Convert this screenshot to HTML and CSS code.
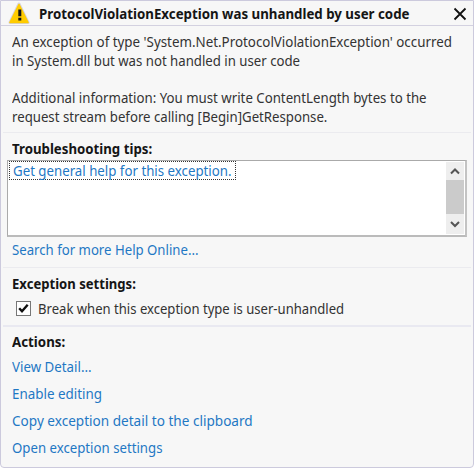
FILE: index.html
```html
<!DOCTYPE html>
<html lang="en">
<head>
<meta charset="utf-8">
<title>Exception Assistant</title>
<link rel="stylesheet" href="styles.css">
</head>
<body>
<main class="dialog">
  <header class="titlebar">
    <svg class="warning" width="22" height="22" viewBox="0 0 22 22">
      <path d="M11 2 20 20.5H2Z" fill="#ffcc00" stroke="#d5d3df" stroke-width="3" stroke-linejoin="round"/>
      <path d="M11 2.5 20 20.5H2Z" fill="#ffcc00" stroke="#ffcc00" stroke-width="1.6" stroke-linejoin="round"/>
      <path d="M10.3 7.5h3v6.8h-3zM10.3 15.7h3v2.7h-3z" fill="#151515"/>
    </svg>
    <h1><span class="t-title">ProtocolViolationException was unhandled by user code</span></h1>
    <svg class="close" width="14" height="14" viewBox="0 0 14 14"><path d="M1.5 1.5 12.5 12.5M12.5 1.5 1.5 12.5" stroke="#111" stroke-width="1.8" fill="none"/></svg>
  </header>
  <section class="message">
    <p><span class="t-m1">An exception of type 'System.Net.ProtocolViolationException' occurred</span><br><span class="t-m2">in System.dll but was not handled in user code</span></p>
    <p><span class="t-m3">Additional information: You must write ContentLength bytes to the</span><br><span class="t-m4">request stream before calling [Begin]GetResponse.</span></p>
  </section>
  <section class="tips">
    <h2><span class="t-tips">Troubleshooting tips:</span></h2>
    <div class="listbox">
      <a class="focused"><span class="t-get">Get general help for this exception.</span></a>
      <div class="scrollbar">
        <svg width="18" height="18" viewBox="0 0 18 18"><path d="M5 11.5 9 7.5 13 11.5" fill="none" stroke="#555" stroke-width="2"/></svg>
        <div class="thumb"></div>
        <svg width="18" height="20" viewBox="0 0 18 20"><path d="M5 8 9 12 13 8" fill="none" stroke="#555" stroke-width="2"/></svg>
      </div>
    </div>
    <a class="search"><span class="t-search">Search for more Help Online...</span></a>
  </section>
  <section class="settings">
    <h2><span class="t-set">Exception settings:</span></h2>
    <label class="option">
      <svg width="15" height="15" viewBox="0 0 15 15"><rect x=".5" y=".5" width="14" height="14" fill="#fff" stroke="#777"/><path d="M3.2 7.2 6 10.2 11.7 3.8" fill="none" stroke="#111" stroke-width="2.4"/></svg>
      <span class="t-break">Break when this exception type is user-unhandled</span>
    </label>
  </section>
  <section class="actions">
    <h2><span class="t-act">Actions:</span></h2>
    <a><span class="t-view">View Detail...</span></a>
    <a><span class="t-enable">Enable editing</span></a>
    <a><span class="t-copy">Copy exception detail to the clipboard</span></a>
    <a><span class="t-open">Open exception settings</span></a>
  </section>
</main>
</body>
</html>
```
FILE: styles.css
```css
* { box-sizing: border-box; }
body { margin: 0; background: #fff; }
h1, h2, p { margin: 0; font-size: 14px; line-height: 19px; }
h1, h2 { font-weight: 700; color: #151515; }
a { color: #1f78c4; }
.dialog {
  width: 474px; height: 468px;
  border: 1px solid #cccadd; border-radius: 0 0 4px 4px;
  background: #f7f7f7; color: #333;
  font: 14px/19px "Noto Sans", "Open Sans", sans-serif;
  white-space: nowrap; overflow: hidden;
}
.titlebar { display: flex; height: 25px; border-bottom: 1px solid #d3d1e0; }
.warning { margin: 1px 9px 0 7px; flex: none; }
.titlebar h1 { padding-top: 3px; flex: 1; min-width: 0; }
.close { margin: 6px 6px 0 0; flex: none; }
.message { height: 106px; padding: 6px 11px 0; }
.message p + p { margin-top: 18px; }
.tips, .settings, .actions { margin: 0 2px; border-top: 1px solid #ebebef; }
.tips { height: 135px; padding: 6px 4px 0; }
.tips h2, .search { padding-left: 5px; }
.listbox {
  display: flex; justify-content: space-between; align-items: flex-start;
  width: 460px; height: 77px; margin-top: 2px; padding: 0 1px 0 1px;
  border: 1px solid #aaa; border-right: 2px solid #c3c3c3; border-bottom: 2px solid #bbb; background: #fff;
}
.focused { height: 19px; width: 227px; padding-left: 3px; border: 1px dotted #333; line-height: 17px; }
.scrollbar { display: flex; flex-direction: column; width: 18px; height: 72px; margin-top: 1px; background: #eee; }
.scrollbar svg { flex: none; }
.thumb { flex: 1; background: #cbcbcb; }
.search { display: block; margin-top: 3px; }
.settings { height: 58px; padding: 6px 9px 0; }
.option { display: flex; align-items: center; gap: 7px; margin-top: 6px; padding-left: 4px; }
.actions { padding: 5px 9px 0; border-top: 2px solid #e9e9f1; }
.actions a { display: block; margin-top: 8px; }
.actions h2 + a { margin-top: 6px; }

/* Slightly condensed lettering, tuned per line */
[class^="t-"] { display: inline-block; vertical-align: top; transform-origin: 0 0; }
.t-title { transform: scaleX(.949); }
.t-m1 { transform: scaleX(.954); }
.t-m2 { transform: scaleX(.943); }
.t-m3 { transform: scaleX(.946); }
.t-m4 { transform: scaleX(.943); }
.t-tips { transform: scaleX(.946); }
.t-get { transform: scaleX(.947); }
.t-search { transform: scaleX(.942); }
.t-set { transform: scaleX(.935); }
.t-break { transform: scaleX(.935); }
.t-act { transform: scaleX(.95); }
.t-view { transform: scaleX(.95); }
.t-enable { transform: scaleX(.957); }
.t-copy { transform: scaleX(.97); }
.t-open { transform: scaleX(.944); }
```
